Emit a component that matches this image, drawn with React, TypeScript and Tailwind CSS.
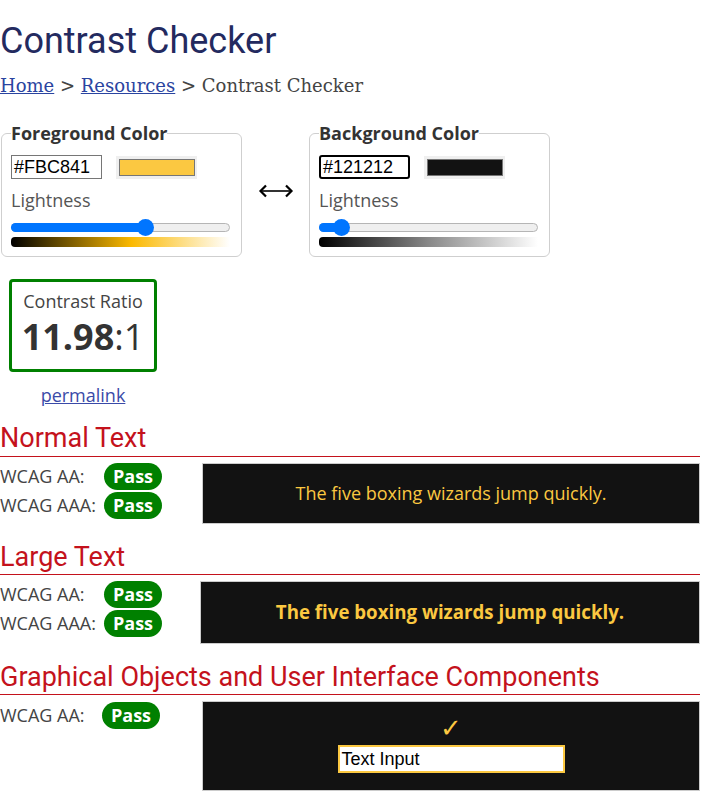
import React from "react";

const SANS = "font-['Open_Sans',sans-serif]";

function ColorField({
  legend,
  hex,
  swatch,
  thumb,
  gradient,
  focused,
}: {
  legend: string;
  hex: string;
  swatch: string;
  thumb: number;
  gradient: string;
  focused?: boolean;
}) {
  return (
    <fieldset className="w-[241px] rounded-[6px] border border-[#cfcfcf] px-[9px] pb-[9px] pt-[10px]">
      <legend className="px-0 text-[18px] font-bold leading-[24px] text-[#333]">{legend}</legend>
      <div className="flex items-center gap-[14px]">
        <div
          className={
            focused
              ? "flex h-[24px] w-[91px] items-center rounded-[3px] border-2 border-black px-[2px] font-['Liberation_Sans',sans-serif] text-[18px] text-black"
              : "flex h-[24px] w-[91px] items-center border border-[#767676] px-[2px] font-['Liberation_Sans',sans-serif] text-[18px] text-black"
          }
        >
          {hex}
        </div>
        <div className="flex h-[23px] w-[81px] items-center justify-center bg-[#efefef]">
          <div className="h-[17px] w-[76px] border border-[#767676]" style={{ background: swatch }} />
        </div>
      </div>
      <div className="mt-[9px] text-[18px] leading-[24px] text-[#555]">Lightness</div>
      <div className="relative mt-[7px] h-[16px] w-[219px]">
        <div className="absolute left-0 right-0 top-[4px] h-[9px] rounded-full border border-[#b5b5b5] bg-[#efefef]" />
        <div
          className="absolute left-0 top-[4px] h-[9px] rounded-full bg-[#0075ff]"
          style={{ width: thumb }}
        />
        <div
          className="absolute top-0 h-[17px] w-[17px] rounded-full bg-[#0075ff]"
          style={{ left: thumb - 8 }}
        />
      </div>
      <div className="mt-[2px] h-[10px] w-[219px] rounded-l-[4px]" style={{ background: gradient }} />
    </fieldset>
  );
}

// thin double-headed swap arrow
function SwapArrow() {
  return (
    <svg width="36" height="16" viewBox="0 0 36 16" fill="none">
      <path d="M3 8h30" stroke="#000" strokeWidth="1.6" />
      <path d="M8 2.5 2.5 8 8 13.5" stroke="#000" strokeWidth="2.2" strokeLinejoin="miter" />
      <path d="M28 2.5 33.5 8 28 13.5" stroke="#000" strokeWidth="2.2" strokeLinejoin="miter" />
    </svg>
  );
}

function Pass() {
  return (
    <span className="inline-flex h-[27px] w-[58px] items-center justify-center rounded-full bg-[#008000] text-[18px] font-bold text-white">
      Pass
    </span>
  );
}

function Heading({ children, tight }: { children: React.ReactNode; tight?: boolean }) {
  return (
    <div>
      <h2 className="font-['Roboto',sans-serif] text-[27px] leading-[32px] text-[#c4121c]">{children}</h2>
      <div className={tight ? "mt-[1px] h-px bg-[#c4121c]" : "mt-[2px] h-px bg-[#c4121c]"} />
    </div>
  );
}

function Row({ label, w = 104 }: { label: string; w?: number }) {
  return (
    <div className="flex h-[29px] items-center">
      <span className="text-[18px] text-[#444]" style={{ width: w }}>
        {label}
      </span>
      <Pass />
    </div>
  );
}

export default function App() {
  return (
    <div className={`w-[700px] bg-white ${SANS}`}>
      <h1 className="pt-[20px] font-['Roboto',sans-serif] text-[36px] leading-[42px] text-[#232a5f]">
        Contrast Checker
      </h1>
      <div className="mt-[12px] font-['DejaVu_Serif',serif] text-[18px] leading-[24px] text-[#444]">
        <a className="text-[#2a44a0] underline">Home</a> &gt;{" "}
        <a className="text-[#2a44a0] underline">Resources</a> &gt; Contrast Checker
      </div>

      <div className="mt-[23px] flex items-center pl-[1px]">
        <ColorField
          legend="Foreground Color"
          hex="#FBC841"
          swatch="#fbc841"
          thumb={134}
          gradient="linear-gradient(to right, #000 0%, #fbb900 55%, #fff 100%)"
        />
        <div className="flex w-[67px] justify-center pt-[4px]">
          <SwapArrow />
        </div>
        <ColorField
          legend="Background Color"
          hex="#121212"
          swatch="#121212"
          thumb={22}
          gradient="linear-gradient(to right, #000 0%, #888 50%, #fff 100%)"
          focused
        />
      </div>

      <div className="ml-[9px] mt-[22px] flex w-[148px] flex-col items-center rounded-[4px] border-[3px] border-[#008000] pb-[11px] pt-[7px]">
        <div className="text-[18px] leading-[24px] text-[#444]">Contrast Ratio</div>
        <div className="mt-[3px] text-[36px] leading-[42px] text-[#333]">
          <b>11.98</b>:1
        </div>
      </div>
      <div className="mt-[11px] w-[166px] text-center text-[18px] leading-[24px]">
        <a className="text-[#3a4aa8] underline">permalink</a>
      </div>

      <div className="mt-[15px]">
        <Heading>Normal Text</Heading>
        <div className="mt-[5px] flex items-start">
          <div className="flex w-[202px] flex-col">
            <Row label="WCAG AA:" />
            <Row label="WCAG AAA:" />
          </div>
          <div className="mt-[1px] flex h-[61px] flex-1 items-center justify-center border border-[#ccc] bg-[#121212] text-[18px] text-[#fbc841]">
            The five boxing wizards jump quickly.
          </div>
        </div>
      </div>

      <div className="mt-[17px]">
        <Heading tight>Large Text</Heading>
        <div className="mt-[5px] flex items-start">
          <div className="flex w-[200px] flex-col">
            <Row label="WCAG AA:" />
            <Row label="WCAG AAA:" />
          </div>
          <div className="mt-[1px] flex h-[63px] flex-1 items-center justify-center border border-[#ccc] bg-[#121212] text-[18.7px] font-bold text-[#fbc841]">
            The five boxing wizards jump quickly.
          </div>
        </div>
      </div>

      <div className="mt-[17px]">
        <Heading tight>Graphical Objects and User Interface Components</Heading>
        <div className="mt-[6px] flex items-start">
          <div className="flex w-[202px] flex-col">
            <Row label="WCAG AA:" w={102} />
          </div>
          <div className="flex h-[90px] flex-1 flex-col items-center justify-center border border-[#ccc] bg-[#121212] pb-[4px]">
            <span className="font-['DejaVu_Sans',sans-serif] text-[26px] leading-[26px] text-[#fbc841]">✓</span>
            <div className="mt-[4px] flex h-[28px] w-[227px] items-center border-2 border-[#fbc841] bg-white px-[2px] font-['Liberation_Sans',sans-serif] text-[18px] text-black">
              Text Input
            </div>
          </div>
        </div>
      </div>
      <div className="h-[16px]" />
    </div>
  );
}
